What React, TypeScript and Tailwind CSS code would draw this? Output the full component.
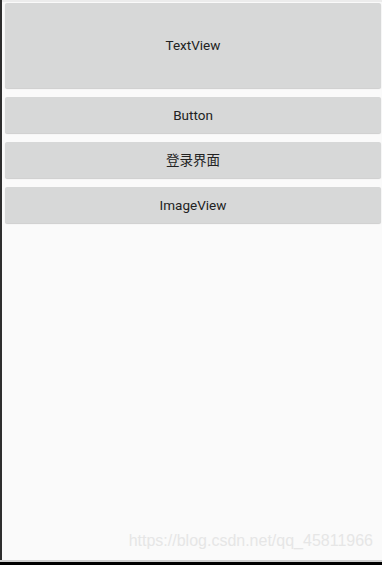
export default function App() {
  const buttons = ["Button", "登录界面", "ImageView"];
  return (
    <div
      className="flex h-[565px] w-[382px] flex-col overflow-hidden bg-black"
      style={{ fontFamily: 'Roboto, "Noto Sans CJK SC", sans-serif' }}
    >
      <div className="flex flex-1">
        <div className="w-[2px] bg-[#2e2e2e]" />
        <div className="relative flex flex-1 flex-col gap-[9px] border-t-[2px] border-[#ececec] bg-[#fafafa] pl-[3px] pt-[1px] pr-[1px]">
          <div className="flex h-[85px] items-center justify-center rounded-[2px] bg-[#d7d8d8] text-[13.5px] text-[#222] shadow-[0_1px_1px_rgba(0,0,0,0.18)]">
            TextView
          </div>
          {buttons.map((b) => (
            <div
              key={b}
              className="flex h-[36px] items-center justify-center rounded-[2px] bg-[#d7d8d8] text-[13.5px] text-[#222] shadow-[0_1px_1px_rgba(0,0,0,0.18)]"
            >
              {b}
            </div>
          ))}
          <div
            className="absolute bottom-[7px] right-[9px] text-[16px] text-[#e6e6e6]"
            style={{ fontFamily: '"Liberation Sans", Arial, sans-serif' }}
          >
            https://blog.csdn.net/qq_45811966
          </div>
        </div>
      </div>
      <div className="h-[2px] bg-[#cfcfcf]" />
      <div className="h-[3px] bg-black" />
    </div>
  );
}
